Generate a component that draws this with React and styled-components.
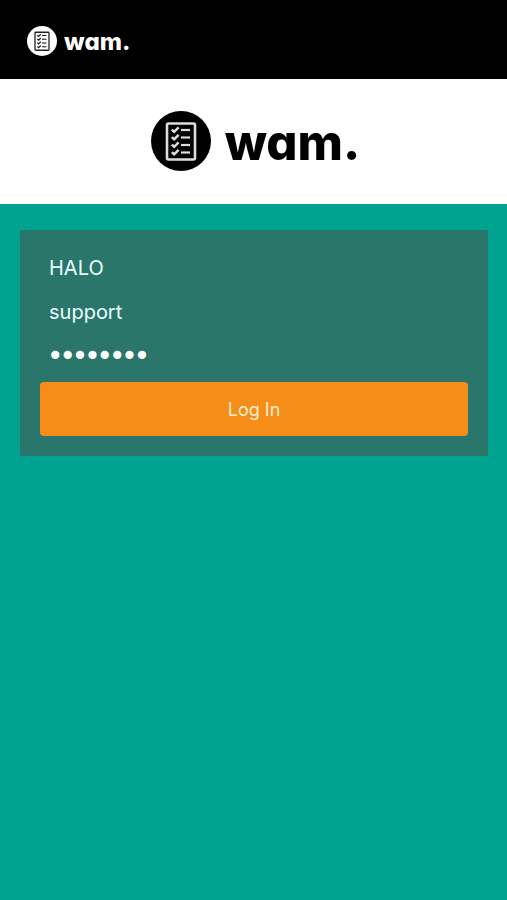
import React, { useState } from 'react';
import styled, { createGlobalStyle } from 'styled-components';


//------------- Styling -------------//

const GlobalStyle = createGlobalStyle`
    * {
        box-sizing: border-box;
    }
    body {
        margin: 0;
        background-color: #00a290;
        font-family: Inter, "Liberation Sans", sans-serif;
    }
`;

const Header = styled.header`
    display: flex;
    align-items: center;
    height: 79px;
    padding: 3px 27px 0;
    background-color: #000;
`;

const Banner = styled.div`
    display: flex;
    align-items: center;
    justify-content: center;
    height: 125px;
    padding: 0 0 2px 4px;
    background-color: #fff;
`;

const Brand = styled.a`
    display: flex;
    align-items: center;
    gap: ${(props) => (props.$large ? '14px' : '7px')};
    color: ${(props) => (props.$light ? '#fff' : '#000')};
    font-size: ${(props) => (props.$large ? '49px' : '24px')};
    font-weight: 800;
    line-height: 1;
    font-feature-settings: "cv11";
    text-decoration: none;

    svg {
        width: ${(props) => (props.$large ? '60px' : '30px')};
        height: ${(props) => (props.$large ? '60px' : '30px')};
    }
    span {
        padding-top: ${(props) => (props.$large ? '4px' : '2px')};
    }
`;

const LoginForm = styled.form`
    display: flex;
    flex-direction: column;
    margin: 26px 19px 26px 20px;
    padding: 16px 20px 20px;
    background-color: #2b766b;
`;

const Field = styled.input`
    height: 44px;
    padding: 0 9px;
    border: none;
    outline: none;
    background: transparent;
    color: #e9fffb;
    font-family: inherit;
    font-size: 20px;

    /* heavier dots */
    &[type="password"] {
        color: #fff;
        font-family: "DejaVu Sans", sans-serif;
        font-size: 21px;
        -webkit-text-stroke: 2px #fff;
    }
`;

const LoginButton = styled.button`
    height: 54px;
    margin-top: 4px;
    border: none;
    border-radius: 4px;
    background-color: #f78d19;
    color: #fff0d0;
    font-family: inherit;
    font-size: 18px;
    cursor: pointer;
`;


//------------- Components -------------//

const rows = [19, 26.5, 34, 41.5];

function Logo({ light, large }) {
    const disc = light ? '#fff' : '#000';
    const line = light ? '#222' : '#ddd';

    return (
        <Brand href="#" $light={light} $large={large}>
            <svg viewBox="0 0 60 60" fill="none" aria-hidden="true">
                <circle cx="30" cy="30" r="30" fill={disc} />
                <rect x="16" y="12.5" width="28" height="36" rx="1.5" stroke={line} strokeWidth="2.6" />
                {rows.map((y) => (
                    <g key={y} stroke={line}>
                        <path d={`M20.8 ${y - 0.4}l2.4 2.2 4.4-4.4`} strokeWidth="2.6" />
                        <path d={`M30 ${y}h9`} strokeWidth="2.2" />
                    </g>
                ))}
            </svg>
            <span>wam.</span>
        </Brand>
    );
}

export default function App() {
    const [company, setCompany] = useState('HALO');
    const [username, setUsername] = useState('support');
    const [password, setPassword] = useState('password');

    return (
        <>
            <GlobalStyle />
            <Header>
                <Logo light />
            </Header>
            <main>
                <Banner>
                    <Logo large />
                </Banner>
                <LoginForm onSubmit={(e) => e.preventDefault()}>
                    <Field
                        type="text"
                        aria-label="Company"
                        value={company}
                        onChange={(e) => setCompany(e.target.value)}
                    />
                    <Field
                        type="text"
                        aria-label="Username"
                        value={username}
                        onChange={(e) => setUsername(e.target.value)}
                    />
                    <Field
                        type="password"
                        aria-label="Password"
                        value={password}
                        onChange={(e) => setPassword(e.target.value)}
                    />
                    <LoginButton type="submit">Log In</LoginButton>
                </LoginForm>
            </main>
        </>
    );
}
